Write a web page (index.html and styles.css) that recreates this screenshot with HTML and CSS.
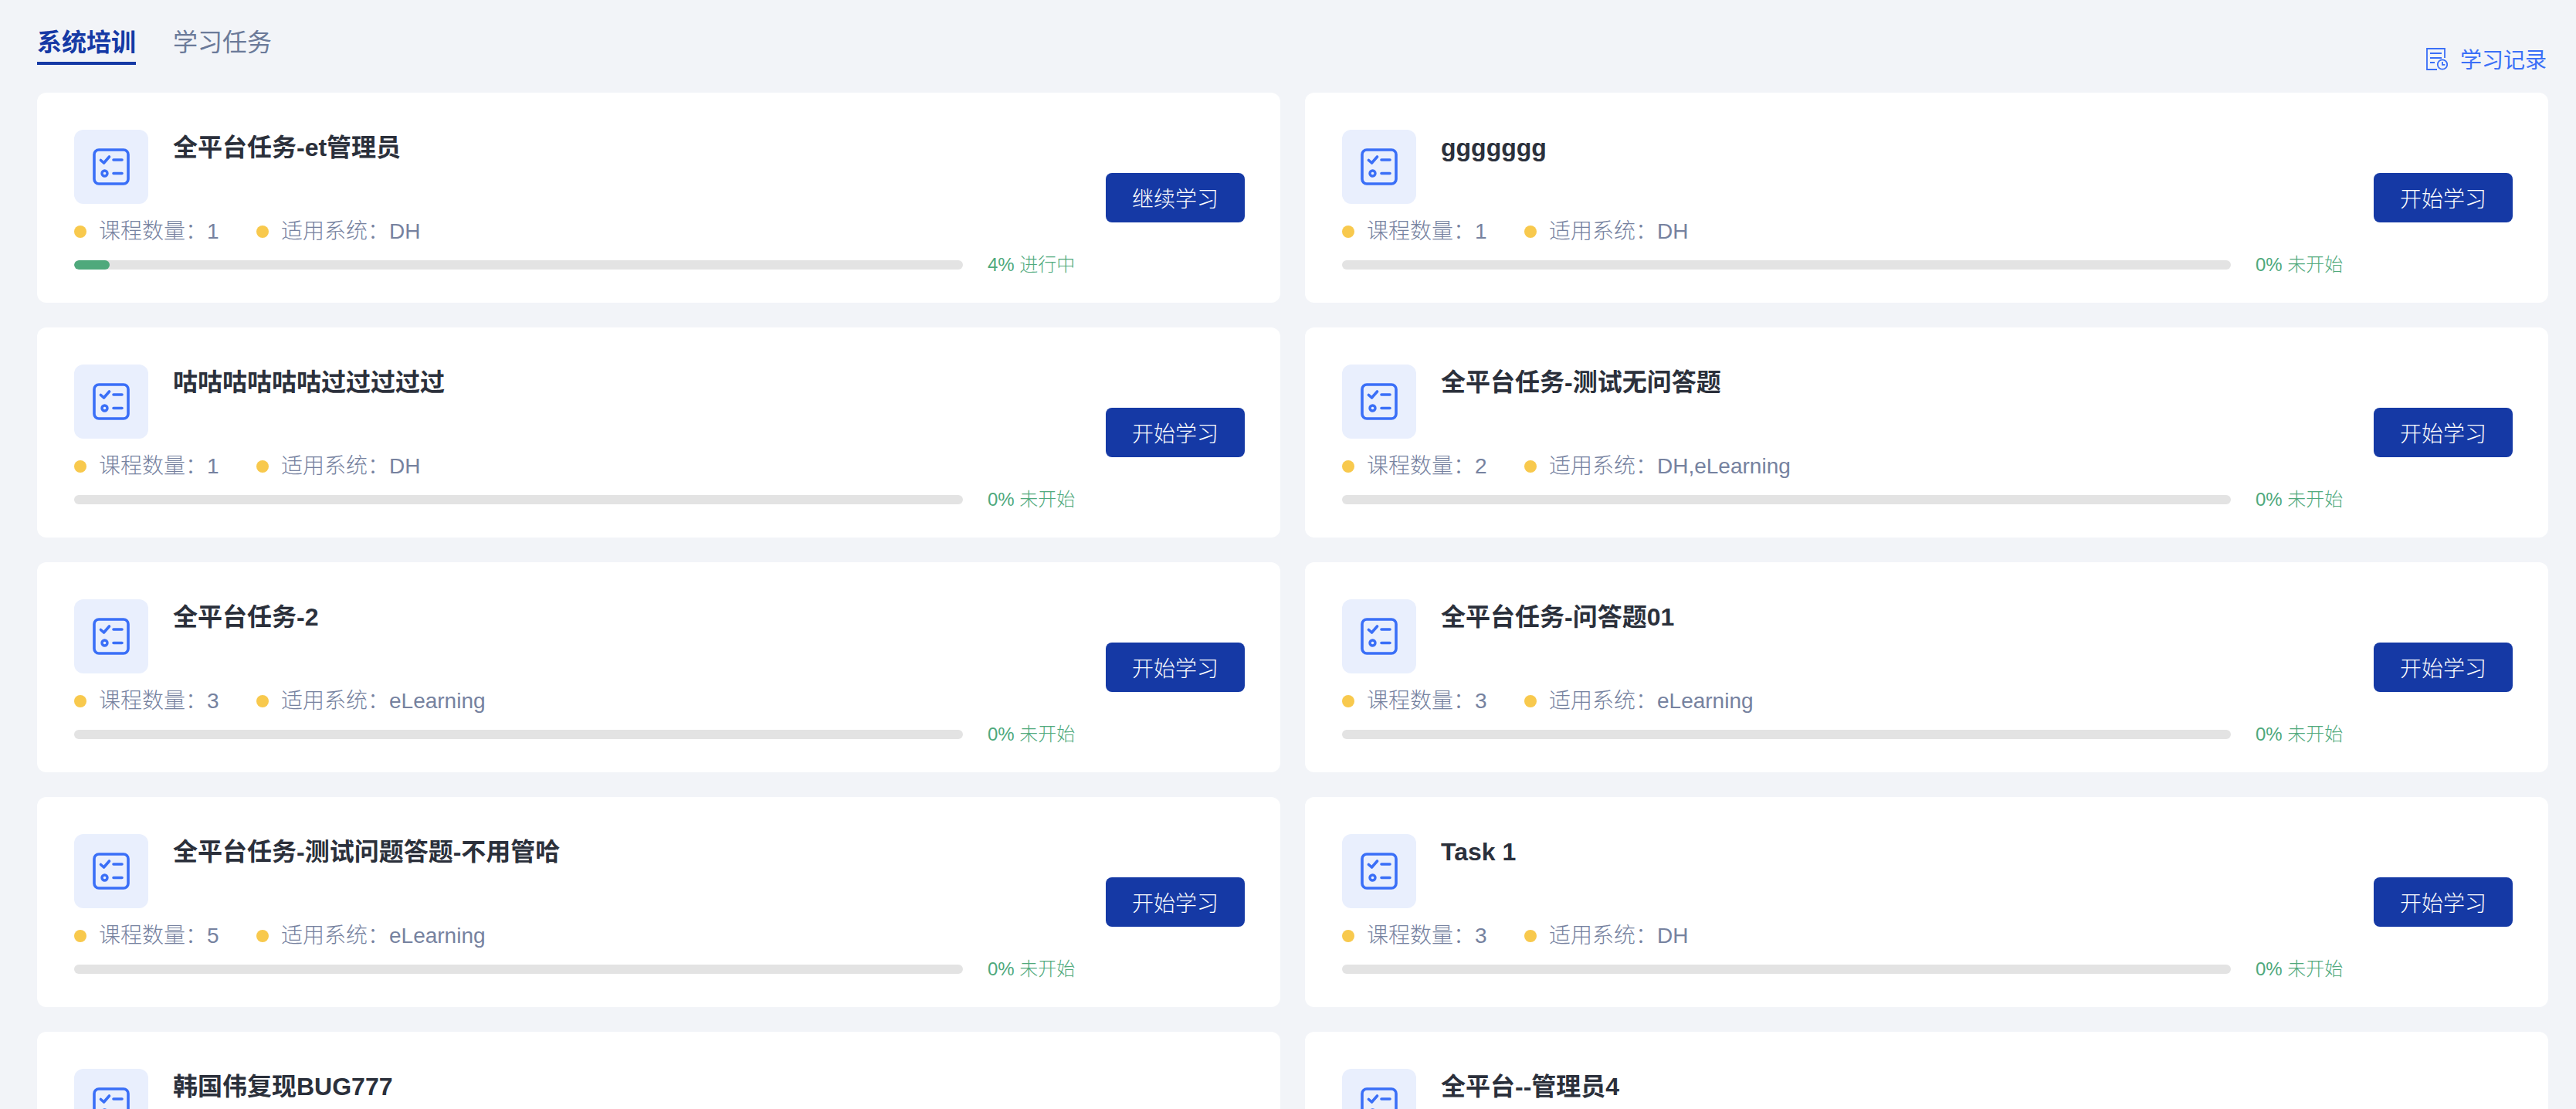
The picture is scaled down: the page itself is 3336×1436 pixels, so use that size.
FILE: index.html
```html
<!DOCTYPE html>
<html lang="zh-CN">
<head>
  <meta charset="UTF-8">
  <title>系统培训</title>
  <link rel="stylesheet" href="styles.css">
</head>
<body>
  <svg class="defs" width="0" height="0">
    <symbol id="task-icon" viewBox="0 0 48 48">
      <rect x="2" y="2" width="44" height="44" rx="6" fill="none" stroke="currentColor" stroke-width="3.6"/>
      <path d="M10.5 15.5l4 3.5 7-8" fill="none" stroke="currentColor" stroke-width="3.6" stroke-linecap="round" stroke-linejoin="round"/>
      <path d="M27 15h11M27 32.5h11" fill="none" stroke="currentColor" stroke-width="3.6" stroke-linecap="round"/>
      <circle cx="15.5" cy="32.5" r="3.5" fill="none" stroke="currentColor" stroke-width="3.4"/>
    </symbol>
  </svg>

  <div class="header">
    <div class="tabs">
      <div class="tab active">系统培训</div>
      <div class="tab">学习任务</div>
    </div>
    <a class="record-link">
      <svg class="record-icon" viewBox="0 0 28 29" fill="none" stroke="currentColor" stroke-width="1.8">
        <path d="M14 28H1V1h23v12"/>
        <path d="M5 7h15M5 13h15M5 19h6"/>
        <circle cx="21" cy="21.5" r="6.2"/>
        <path d="M21 18v3.8h3.4"/>
      </svg>
      学习记录
    </a>
  </div>

  <div class="task-grid">
    <div class="card">
      <div class="card-main">
        <div class="card-top">
          <div class="icon-box"><svg class="task-icon"><use href="#task-icon"/></svg></div>
          <div class="card-title">全平台任务-et管理员</div>
        </div>
        <div class="meta">
          <span class="meta-item count">课程数量：1</span>
          <span class="meta-item">适用系统：DH</span>
        </div>
        <div class="progress-row">
          <div class="progress"><div class="progress-fill" style="width: 4%"></div></div>
          <div class="progress-text">4% 进行中</div>
        </div>
      </div>
      <button class="btn">继续学习</button>
    </div>

    <div class="card">
      <div class="card-main">
        <div class="card-top">
          <div class="icon-box"><svg class="task-icon"><use href="#task-icon"/></svg></div>
          <div class="card-title">ggggggg</div>
        </div>
        <div class="meta">
          <span class="meta-item count">课程数量：1</span>
          <span class="meta-item">适用系统：DH</span>
        </div>
        <div class="progress-row">
          <div class="progress"></div>
          <div class="progress-text">0% 未开始</div>
        </div>
      </div>
      <button class="btn">开始学习</button>
    </div>

    <div class="card">
      <div class="card-main">
        <div class="card-top">
          <div class="icon-box"><svg class="task-icon"><use href="#task-icon"/></svg></div>
          <div class="card-title">咕咕咕咕咕咕过过过过过</div>
        </div>
        <div class="meta">
          <span class="meta-item count">课程数量：1</span>
          <span class="meta-item">适用系统：DH</span>
        </div>
        <div class="progress-row">
          <div class="progress"></div>
          <div class="progress-text">0% 未开始</div>
        </div>
      </div>
      <button class="btn">开始学习</button>
    </div>

    <div class="card">
      <div class="card-main">
        <div class="card-top">
          <div class="icon-box"><svg class="task-icon"><use href="#task-icon"/></svg></div>
          <div class="card-title">全平台任务-测试无问答题</div>
        </div>
        <div class="meta">
          <span class="meta-item count">课程数量：2</span>
          <span class="meta-item">适用系统：DH,eLearning</span>
        </div>
        <div class="progress-row">
          <div class="progress"></div>
          <div class="progress-text">0% 未开始</div>
        </div>
      </div>
      <button class="btn">开始学习</button>
    </div>

    <div class="card">
      <div class="card-main">
        <div class="card-top">
          <div class="icon-box"><svg class="task-icon"><use href="#task-icon"/></svg></div>
          <div class="card-title">全平台任务-2</div>
        </div>
        <div class="meta">
          <span class="meta-item count">课程数量：3</span>
          <span class="meta-item">适用系统：eLearning</span>
        </div>
        <div class="progress-row">
          <div class="progress"></div>
          <div class="progress-text">0% 未开始</div>
        </div>
      </div>
      <button class="btn">开始学习</button>
    </div>

    <div class="card">
      <div class="card-main">
        <div class="card-top">
          <div class="icon-box"><svg class="task-icon"><use href="#task-icon"/></svg></div>
          <div class="card-title">全平台任务-问答题01</div>
        </div>
        <div class="meta">
          <span class="meta-item count">课程数量：3</span>
          <span class="meta-item">适用系统：eLearning</span>
        </div>
        <div class="progress-row">
          <div class="progress"></div>
          <div class="progress-text">0% 未开始</div>
        </div>
      </div>
      <button class="btn">开始学习</button>
    </div>

    <div class="card">
      <div class="card-main">
        <div class="card-top">
          <div class="icon-box"><svg class="task-icon"><use href="#task-icon"/></svg></div>
          <div class="card-title">全平台任务-测试问题答题-不用管哈</div>
        </div>
        <div class="meta">
          <span class="meta-item count">课程数量：5</span>
          <span class="meta-item">适用系统：eLearning</span>
        </div>
        <div class="progress-row">
          <div class="progress"></div>
          <div class="progress-text">0% 未开始</div>
        </div>
      </div>
      <button class="btn">开始学习</button>
    </div>

    <div class="card">
      <div class="card-main">
        <div class="card-top">
          <div class="icon-box"><svg class="task-icon"><use href="#task-icon"/></svg></div>
          <div class="card-title">Task 1</div>
        </div>
        <div class="meta">
          <span class="meta-item count">课程数量：3</span>
          <span class="meta-item">适用系统：DH</span>
        </div>
        <div class="progress-row">
          <div class="progress"></div>
          <div class="progress-text">0% 未开始</div>
        </div>
      </div>
      <button class="btn">开始学习</button>
    </div>

    <div class="card">
      <div class="card-main">
        <div class="card-top">
          <div class="icon-box"><svg class="task-icon"><use href="#task-icon"/></svg></div>
          <div class="card-title">韩国伟复现BUG777</div>
        </div>
      </div>
    </div>

    <div class="card">
      <div class="card-main">
        <div class="card-top">
          <div class="icon-box"><svg class="task-icon"><use href="#task-icon"/></svg></div>
          <div class="card-title">全平台--管理员4</div>
        </div>
      </div>
    </div>
  </div>
</body>
</html>
```

FILE: styles.css
```css
html,
body {
  height: 100%;
  overflow: hidden;
}
body {
  margin: 0;
  background-color: #f2f4f8;
  font-family: "Liberation Sans", "Noto Sans CJK SC", sans-serif;
}
.defs {
  display: block;
  height: 0;
}
.header {
  display: flex;
  justify-content: space-between;
  height: 120px;
  padding: 0 38px 0 48px;
}
.tabs {
  display: flex;
  gap: 48px;
  align-items: flex-start;
  padding-top: 35px;
}
.tab {
  padding-bottom: 5px;
  border-bottom: 4px solid transparent;
  font-size: 32px;
  line-height: 40px;
  color: #6b7a99;
}
.tab.active {
  border-bottom-color: #1539a5;
  font-weight: bold;
  color: #1539a5;
}
.record-link {
  display: flex;
  align-items: center;
  gap: 16px;
  height: 40px;
  margin-top: 56px;
  font-size: 28px;
  color: #3a6ff7;
}
.record-icon {
  width: 28px;
  height: 29px;
}
.task-grid {
  display: grid;
  grid-template-columns: 1610px 1610px;
  gap: 32px;
  padding-left: 48px;
}
.card {
  display: flex;
  align-items: center;
  justify-content: space-between;
  height: 272px;
  box-sizing: border-box;
  padding: 0 46px 0 48px;
  background-color: #fff;
  border-radius: 12px;
}
.card-main {
  width: 1304px;
  align-self: flex-start;
  padding-top: 48px;
}
.card-top {
  display: flex;
  gap: 32px;
}
.icon-box {
  display: flex;
  align-items: center;
  justify-content: center;
  width: 96px;
  height: 96px;
  background-color: #e9effd;
  border-radius: 12px;
}
.task-icon {
  width: 48px;
  height: 48px;
  color: #3a6ff7;
}
.card-title {
  font-size: 32px;
  line-height: 46px;
  font-weight: bold;
  color: #2b303b;
}
.meta {
  display: flex;
  margin-top: 16px;
  font-size: 28px;
  font-weight: 300;
  line-height: 40px;
  color: #76829f;
}
.meta-item {
  display: flex;
  align-items: center;
}
.meta-item::before {
  content: "";
  width: 16px;
  height: 16px;
  margin-right: 16px;
  background-color: #f8c94d;
  border-radius: 50%;
}
.count {
  width: 236px;
}
.progress-row {
  display: flex;
  align-items: center;
  gap: 32px;
  margin-top: 7px;
}
.progress {
  flex: 1;
  height: 12px;
  background-color: #e3e3e3;
  border-radius: 6px;
  overflow: hidden;
}
.progress-fill {
  height: 100%;
  background-color: #4fa97c;
  border-radius: 6px;
}
.progress-text {
  width: 121px;
  font-size: 24px;
  font-weight: 300;
  line-height: 32px;
  white-space: nowrap;
  color: #4fa97c;
}
.btn {
  width: 180px;
  height: 64px;
  padding: 0;
  border: none;
  border-radius: 8px;
  background-color: #1539a5;
  font-family: inherit;
  font-size: 28px;
  font-weight: 300;
  color: #fff;
  cursor: pointer;
}
```
